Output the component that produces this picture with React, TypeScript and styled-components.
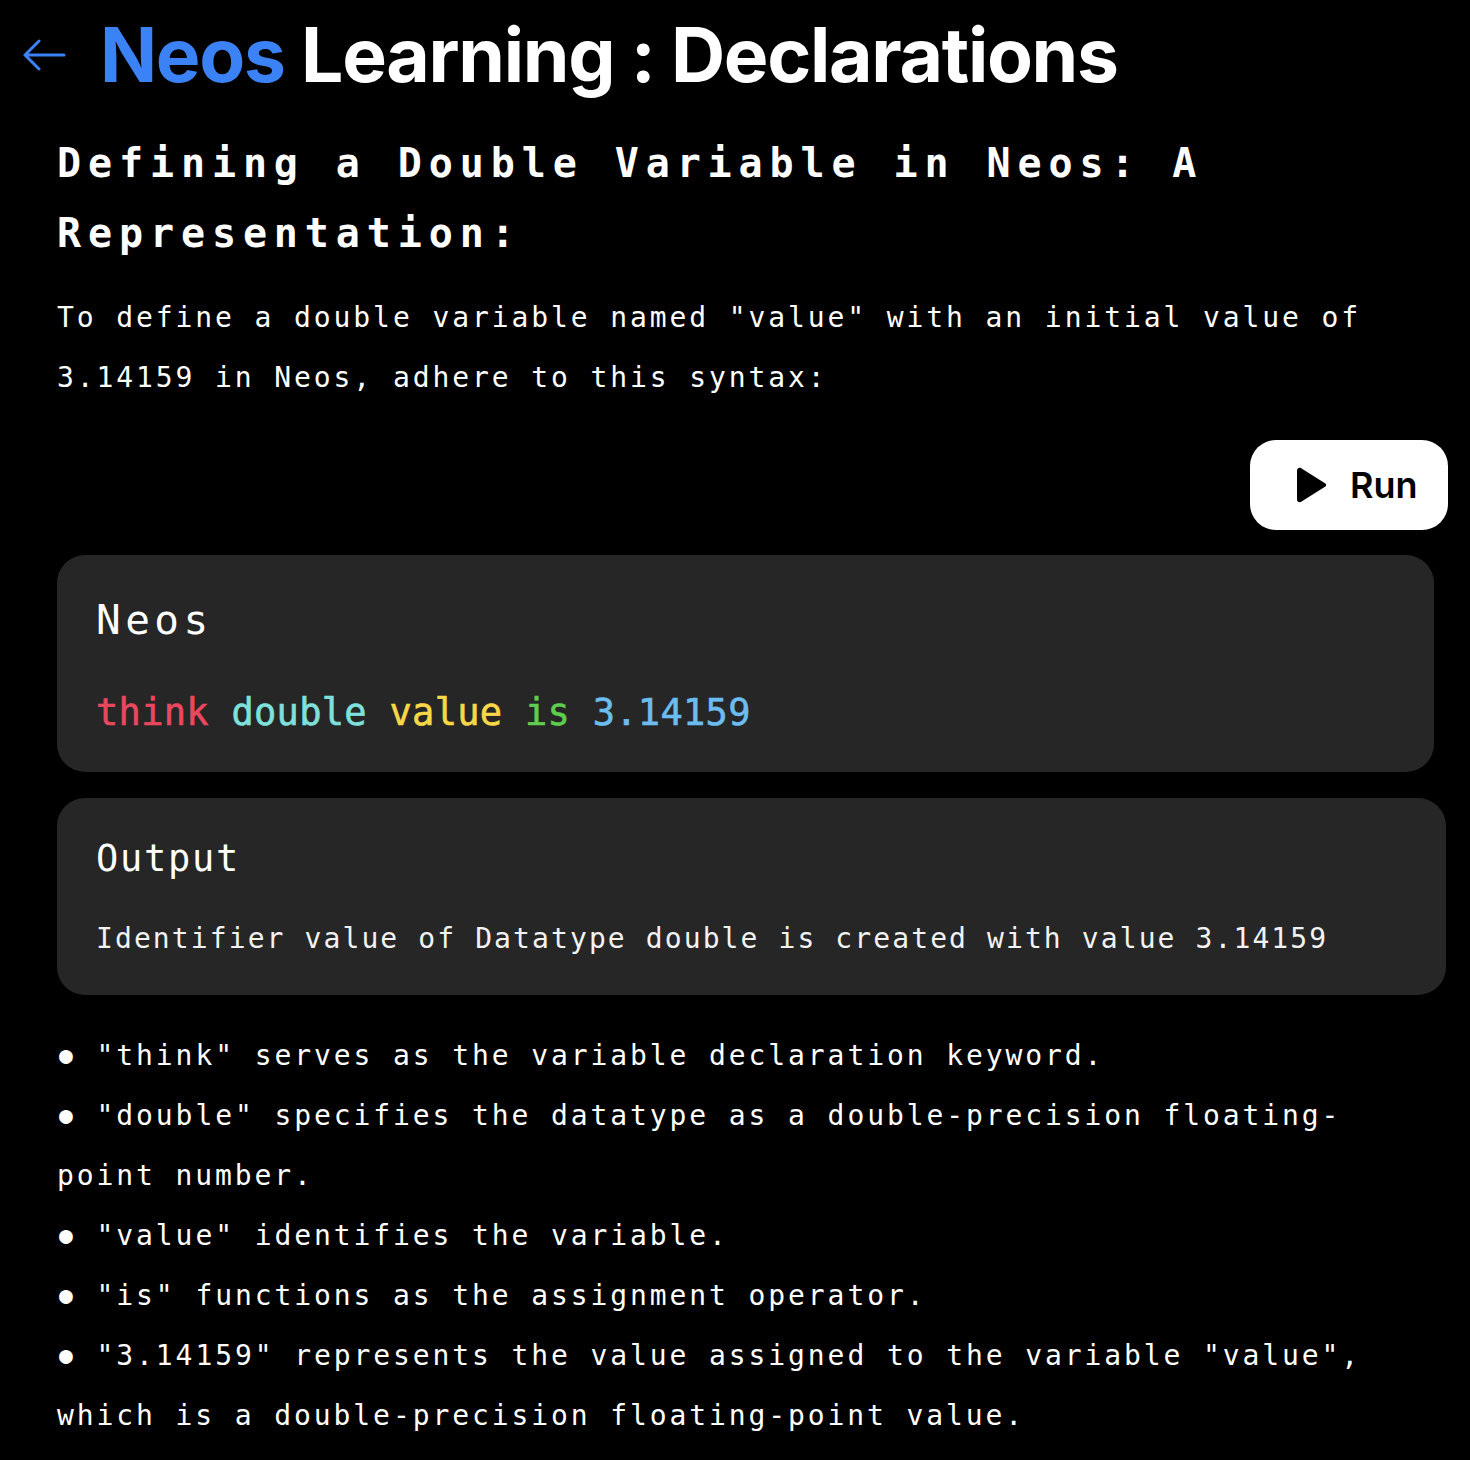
import React from "react";
import styled, { createGlobalStyle } from "styled-components";

const GlobalStyle = createGlobalStyle`
  html, body {
    margin: 0;
    padding: 0;
    background: #000;
  }
  body {
    color: #fff;
    font-family: "DejaVu Sans Mono", "Liberation Mono", monospace;
  }
`;

const Page = styled.div`
  width: 1470px;
  min-height: 1460px;
  box-sizing: border-box;
  background: #000;
  padding: 0 23px 0 22px;
`;

const Header = styled.header`
  display: flex;
  align-items: center;
  gap: 34px;
  height: 108px;
`;

const BackButton = styled.button`
  display: flex;
  align-items: center;
  justify-content: center;
  background: none;
  border: none;
  padding: 0;
  margin-top: 2px;
  color: #3b82f6;
  cursor: pointer;
`;

const Title = styled.h1`
  margin: 0;
  font-family: Inter, "Noto Sans", sans-serif;
  font-weight: 700;
  font-size: 75px;
  line-height: 1;
  letter-spacing: -1.3px;
  color: #fff;
`;

const Brand = styled.span`
  color: #3b82f6;
`;

const Content = styled.main`
  display: flex;
  flex-direction: column;
  padding-left: 35px;
`;

const Heading = styled.h2`
  margin: 20px 0 0;
  font-family: "DejaVu Sans Mono", monospace;
  font-weight: 700;
  font-size: 40px;
  line-height: 70px;
  letter-spacing: 6.9px;
`;

const Paragraph = styled.p`
  margin: 20px 0 0;
  max-width: 1350px;
  font-size: 28px;
  line-height: 60px;
  letter-spacing: 2.9px;
`;

const RunRow = styled.div`
  display: flex;
  justify-content: flex-end;
  margin-top: 32px;
  margin-right: -1px;
`;

const RunButton = styled.button`
  display: flex;
  align-items: center;
  gap: 21px;
  width: 198px;
  height: 90px;
  box-sizing: border-box;
  padding: 0 0 0 43px;
  border: none;
  border-radius: 26px;
  background: #fff;
  color: #000;
  font-family: Inter, "Noto Sans", sans-serif;
  font-weight: 600;
  font-size: 36px;
  cursor: pointer;
`;

const Card = styled.section<{ $right: number; $height: number }>`
  display: flex;
  flex-direction: column;
  box-sizing: border-box;
  height: ${(p) => p.$height}px;
  margin-right: ${(p) => p.$right}px;
  padding: 0 39px;
  border-radius: 28px;
  background: #262626;
`;

const CodeCard = styled(Card)`
  margin-top: 25px;
  padding-top: 41px;
  gap: 43px;
`;

const OutputCard = styled(Card)`
  margin-top: 26px;
  padding-top: 37px;
  gap: 31px;
`;

const CardTitle = styled.div<{ $size: number; $spacing: number }>`
  font-size: ${(p) => p.$size}px;
  letter-spacing: ${(p) => p.$spacing}px;
  line-height: 48px;
`;

const CodeLine = styled.div`
  font-size: 37px;
  line-height: 52px;
  letter-spacing: 0.3px;
  -webkit-text-stroke: 0.6px currentColor;
`;

const Token = styled.span<{ $color: string }>`
  color: ${(p) => p.$color};
`;

const OutputText = styled.div`
  font-size: 28px;
  line-height: 50px;
  letter-spacing: 2.1px;
  color: #f2f2f2;
`;

const NotesList = styled.ul`
  margin: 31px 0 0;
  padding: 0;
  list-style: none;
  max-width: 1350px;
`;

const Note = styled.li`
  margin: 0;
  font-size: 28px;
  line-height: 60px;
  letter-spacing: 2.9px;

  &::before {
    content: "●";
    display: inline-block;
    box-sizing: border-box;
    width: 39.6px;
    padding-left: 2px;
    letter-spacing: 0;
    font-size: 23px;
    line-height: 1;
    vertical-align: 2px;
  }
`;

const ArrowIcon = () => (
  <svg width="44" height="32" viewBox="0 0 44 32" fill="none">
    <path
      d="M42 16H3M17 2L3 16L17 30"
      stroke="currentColor"
      strokeWidth="3"
      strokeLinecap="round"
      strokeLinejoin="round"
    />
  </svg>
);

const PlayIcon = () => (
  <svg width="36" height="38" viewBox="0 0 36 38">
    <path
      d="M4 4.5C4 2.2 6.3 1 8.2 2.2L32 17.2C33.6 18.2 33.6 19.8 32 20.8L8.2 35.8C6.3 37 4 35.8 4 33.5Z"
      fill="#000"
    />
  </svg>
);

const notes = [
  '"think" serves as the variable declaration keyword.',
  '"double" specifies the datatype as a double-precision floating-point number.',
  '"value" identifies the variable.',
  '"is" functions as the assignment operator.',
  '"3.14159" represents the value assigned to the variable "value", which is a double-precision floating-point value.',
];

const tokens = [
  { text: "think", color: "#e9485f" },
  { text: "double", color: "#7fe0dc" },
  { text: "value", color: "#f8d748" },
  { text: "is", color: "#5fcd4d" },
  { text: "3.14159", color: "#6cbdef" },
];

export default function App() {
  return (
    <>
      <GlobalStyle />
      <Page>
        <Header>
          <BackButton aria-label="Back">
            <ArrowIcon />
          </BackButton>
          <Title>
            <Brand>Neos</Brand> Learning : Declarations
          </Title>
        </Header>
        <Content>
          <Heading>Defining a Double Variable in Neos: A Representation:</Heading>
          <Paragraph>
            To define a double variable named "value" with an initial value of 3.14159 in
            Neos, adhere to this syntax:
          </Paragraph>
          <RunRow>
            <RunButton>
              <PlayIcon />
              Run
            </RunButton>
          </RunRow>
          <CodeCard $right={13} $height={217}>
            <CardTitle $size={41} $spacing={4.5}>Neos</CardTitle>
            <CodeLine>
              {tokens.map((t, i) => (
                <React.Fragment key={t.text}>
                  <Token $color={t.color}>{t.text}</Token>
                  {i < tokens.length - 1 ? " " : ""}
                </React.Fragment>
              ))}
            </CodeLine>
          </CodeCard>
          <OutputCard $right={1} $height={197}>
            <CardTitle $size={37} $spacing={1.7}>Output</CardTitle>
            <OutputText>
              Identifier value of Datatype double is created with value 3.14159
            </OutputText>
          </OutputCard>
          <NotesList>
            {notes.map((n) => (
              <Note key={n}>{n}</Note>
            ))}
          </NotesList>
        </Content>
      </Page>
    </>
  );
}
